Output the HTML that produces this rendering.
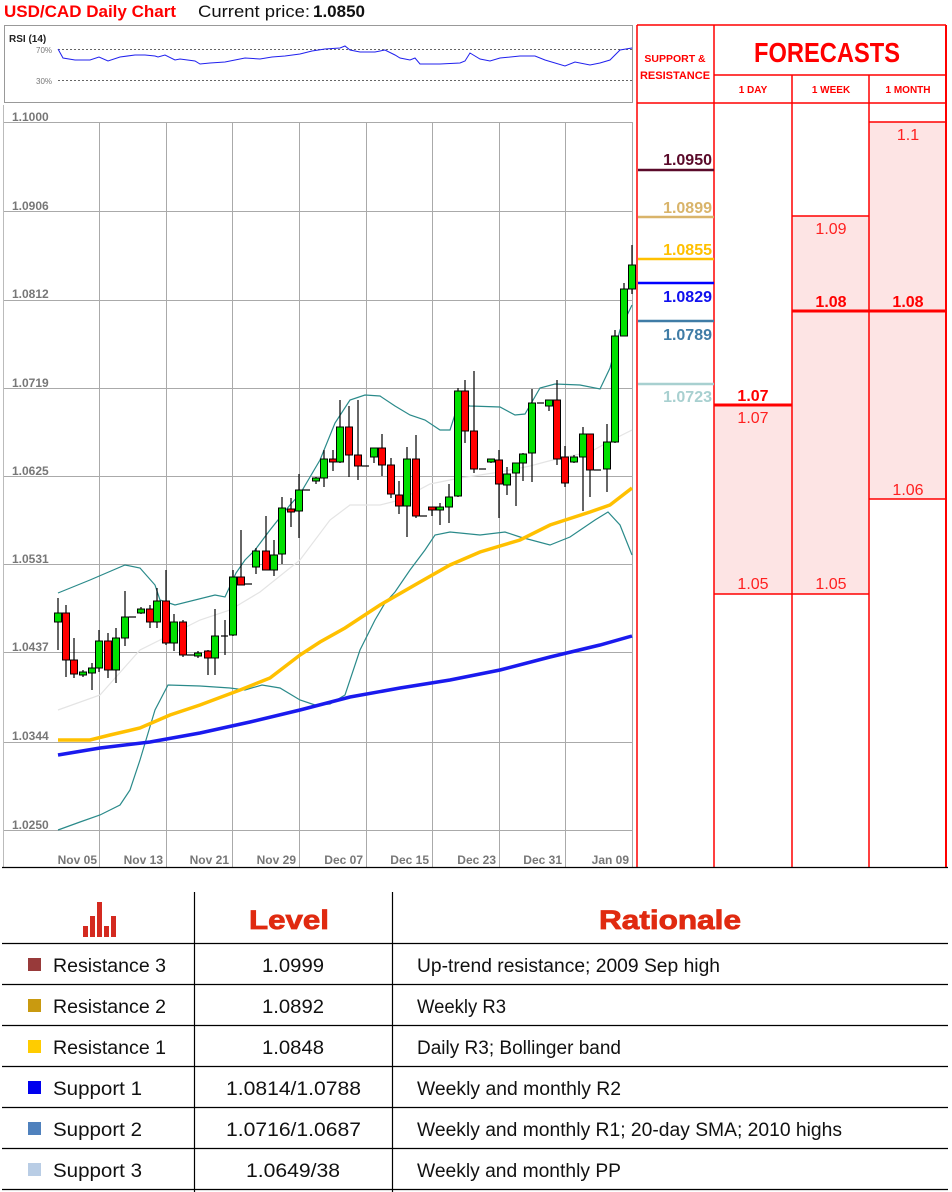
<!DOCTYPE html>
<html><head><meta charset="utf-8"><style>
html,body{margin:0;padding:0;background:#fff;}
svg{display:block;}
text{font-family:"Liberation Sans",sans-serif;}
</style></head><body>
<svg width="952" height="1192" viewBox="0 0 952 1192" xmlns="http://www.w3.org/2000/svg">
<rect width="952" height="1192" fill="#fff"/>
<text x="4" y="17" font-size="17" font-weight="bold" fill="#ff0000" textLength="172" lengthAdjust="spacingAndGlyphs">USD/CAD Daily Chart</text>
<text x="198" y="17" font-size="17" fill="#111" textLength="112" lengthAdjust="spacingAndGlyphs">Current price:</text>
<text x="313" y="17" font-size="17" font-weight="bold" fill="#111" textLength="52" lengthAdjust="spacingAndGlyphs">1.0850</text>

<rect x="4.5" y="25.5" width="628" height="77" fill="#fff" stroke="#999"/>
<text x="9" y="42" font-size="10" font-weight="bold" fill="#222">RSI (14)</text>
<text x="36" y="53" font-size="8" fill="#777">70%</text>
<text x="36" y="84" font-size="8" fill="#777">30%</text>
<line x1="58" y1="49.5" x2="632" y2="49.5" stroke="#666" stroke-dasharray="2,2"/>
<line x1="58" y1="80.5" x2="632" y2="80.5" stroke="#666" stroke-dasharray="2,2"/>
<polyline fill="none" stroke="#2020ee" stroke-width="1" points="58,49 63,58 75,60 90,60 99,57 108,61 120,57 135,55 145,55 155,56 158,57 165,55 175,60 180,59 195,61 200,64 210,63 225,62 235,60 245,58 260,59 272,57 285,56 300,54 312,51 325,49 340,48 345,46 350,50 360,52 375,52 385,50 395,55 400,58 410,60 415,58 420,64 440,64 460,63 465,61 470,53 480,59 490,61 500,58 520,56 535,56 545,60 565,66 575,62 590,65 600,63 610,60 620,50 632,48"/>

<line x1="3.5" y1="105" x2="3.5" y2="867" stroke="#bbb"/>
<text x="12" y="121" font-size="12" font-weight="bold" fill="#777">1.1000</text>
<g stroke="#aaa" stroke-width="1">
<line x1="4" y1="122.5" x2="632" y2="122.5"/>
<line x1="4" y1="211.5" x2="632" y2="211.5"/>
<line x1="4" y1="300.5" x2="632" y2="300.5"/>
<line x1="4" y1="388.5" x2="632" y2="388.5"/>
<line x1="4" y1="476.5" x2="632" y2="476.5"/>
<line x1="4" y1="564.5" x2="632" y2="564.5"/>
<line x1="4" y1="652.5" x2="632" y2="652.5"/>
<line x1="4" y1="742.5" x2="632" y2="742.5"/>
<line x1="4" y1="830.5" x2="632" y2="830.5"/>
<line x1="99.5" y1="122" x2="99.5" y2="867"/>
<line x1="166.5" y1="122" x2="166.5" y2="867"/>
<line x1="232.5" y1="122" x2="232.5" y2="867"/>
<line x1="299.5" y1="122" x2="299.5" y2="867"/>
<line x1="366.5" y1="122" x2="366.5" y2="867"/>
<line x1="432.5" y1="122" x2="432.5" y2="867"/>
<line x1="499.5" y1="122" x2="499.5" y2="867"/>
<line x1="565.5" y1="122" x2="565.5" y2="867"/>
<line x1="632.5" y1="122" x2="632.5" y2="867"/>
</g>
<g font-size="12" font-weight="bold" fill="#777">
<text x="12" y="210">1.0906</text>
<text x="12" y="298">1.0812</text>
<text x="12" y="387">1.0719</text>
<text x="12" y="475">1.0625</text>
<text x="12" y="563">1.0531</text>
<text x="12" y="651">1.0437</text>
<text x="12" y="740">1.0344</text>
<text x="12" y="829">1.0250</text>
</g>
<g font-size="12" font-weight="bold" fill="#777" text-anchor="end">
<text x="97" y="864">Nov 05</text>
<text x="163" y="864">Nov 13</text>
<text x="229" y="864">Nov 21</text>
<text x="296" y="864">Nov 29</text>
<text x="363" y="864">Dec 07</text>
<text x="429" y="864">Dec 15</text>
<text x="496" y="864">Dec 23</text>
<text x="562" y="864">Dec 31</text>
<text x="629" y="864">Jan 09</text>
</g>

<polyline fill="none" stroke="#e4e4e4" stroke-width="1.2" points="58,710 100,695 140,650 160,640 200,620 230,610 260,592 300,560 330,520 350,505 380,505 400,500 430,484 460,478 500,472 530,466 560,458 590,452 612,440 632,430"/>
<polyline fill="none" stroke="#2a8a8a" stroke-width="1.2" points="58,593 90,580 125,565 140,568 155,585 160,600 175,605 215,595 225,597 236,573 245,560 255,550 270,530 290,505 300,494 320,460 335,423 350,400 365,395 380,396 395,406 410,415 425,420 440,430 450,430 458,405 470,406 500,407 515,415 525,414 540,388 555,384 580,385 600,389 610,368 620,330 632,305"/>
<polyline fill="none" stroke="#2a8a8a" stroke-width="1.2" points="58,830 80,822 100,815 120,805 130,790 140,760 155,710 168,685 200,686 230,688 245,690 262,685 280,688 300,700 315,705 330,704 345,695 360,650 375,620 385,603 395,592 410,570 425,550 435,535 450,532 480,535 505,532 520,537 550,545 570,537 595,520 608,512 620,525 632,555"/>
<polyline fill="none" stroke="#ffc000" stroke-width="3.5" points="58,740 90,740 110,735 140,728 170,715 200,705 240,690 270,678 300,655 320,642 345,628 380,605 420,582 450,565 480,552 520,540 550,525 590,512 610,505 632,488"/>
<polyline fill="none" stroke="#1a1aee" stroke-width="3.5" points="58,755 100,748 150,742 200,733 250,722 300,710 350,697 400,688 450,680 500,670 550,657 600,645 632,636"/>

<g stroke="#000" stroke-width="1.2">
<line x1="58" y1="598" x2="58" y2="650"/><line x1="66" y1="605" x2="66" y2="677"/><line x1="74" y1="638" x2="74" y2="678"/><line x1="83" y1="670" x2="83" y2="677"/><line x1="92" y1="663" x2="92" y2="690"/><line x1="99" y1="630" x2="99" y2="672"/><line x1="108" y1="633" x2="108" y2="678"/><line x1="116" y1="628" x2="116" y2="683"/><line x1="125" y1="591" x2="125" y2="646"/><line x1="129" y1="617" x2="136" y2="617"/><line x1="141" y1="607" x2="141" y2="614"/><line x1="150" y1="605" x2="150" y2="628"/><line x1="157" y1="588" x2="157" y2="628"/><line x1="166" y1="570" x2="166" y2="645"/><line x1="174" y1="614" x2="174" y2="651"/><line x1="183" y1="620" x2="183" y2="657"/><line x1="187" y1="655" x2="194" y2="655"/><line x1="198" y1="651" x2="198" y2="658"/><line x1="208" y1="650" x2="208" y2="675"/><line x1="215" y1="609" x2="215" y2="675"/><line x1="225" y1="620" x2="225" y2="655"/><line x1="221" y1="636" x2="228" y2="636"/><line x1="233" y1="570" x2="233" y2="636"/><line x1="241" y1="530" x2="241" y2="585"/><line x1="245" y1="584" x2="252" y2="584"/><line x1="256" y1="548" x2="256" y2="574"/><line x1="266" y1="516" x2="266" y2="570"/><line x1="274" y1="540" x2="274" y2="576"/><line x1="282" y1="497" x2="282" y2="564"/><line x1="291" y1="498" x2="291" y2="527"/><line x1="299" y1="474" x2="299" y2="538"/><line x1="303" y1="490" x2="310" y2="490"/><line x1="316" y1="477" x2="316" y2="484"/><line x1="324" y1="450" x2="324" y2="487"/><line x1="333" y1="450" x2="333" y2="471"/><line x1="340" y1="400" x2="340" y2="463"/><line x1="349" y1="406" x2="349" y2="477"/><line x1="358" y1="400" x2="358" y2="480"/><line x1="362" y1="466" x2="369" y2="466"/><line x1="374" y1="448" x2="374" y2="463"/><line x1="382" y1="434" x2="382" y2="476"/><line x1="391" y1="458" x2="391" y2="498"/><line x1="399" y1="481" x2="399" y2="514"/><line x1="407" y1="447" x2="407" y2="537"/><line x1="416" y1="435" x2="416" y2="518"/><line x1="420" y1="516" x2="427" y2="516"/><line x1="432" y1="507" x2="432" y2="516"/><line x1="440" y1="503" x2="440" y2="525"/><line x1="449" y1="484" x2="449" y2="523"/><line x1="458" y1="388" x2="458" y2="497"/><line x1="465" y1="380" x2="465" y2="443"/><line x1="474" y1="371" x2="474" y2="473"/><line x1="479" y1="469" x2="486" y2="469"/><line x1="491" y1="459" x2="491" y2="463"/><line x1="499" y1="450" x2="499" y2="518"/><line x1="507" y1="467" x2="507" y2="495"/><line x1="516" y1="463" x2="516" y2="506"/><line x1="523" y1="453" x2="523" y2="481"/><line x1="532" y1="389" x2="532" y2="482"/><line x1="537" y1="403" x2="544" y2="403"/><line x1="549" y1="400" x2="549" y2="411"/><line x1="557" y1="380" x2="557" y2="465"/><line x1="565" y1="446" x2="565" y2="487"/><line x1="574" y1="455" x2="574" y2="463"/><line x1="583" y1="427" x2="583" y2="511"/><line x1="590" y1="434" x2="590" y2="497"/><line x1="594" y1="470" x2="601" y2="470"/><line x1="607" y1="424" x2="607" y2="492"/><line x1="615" y1="330" x2="615" y2="443"/><line x1="624" y1="283" x2="624" y2="336"/><line x1="632" y1="245" x2="632" y2="294"/>
</g>
<g stroke="#000" stroke-width="1">
<rect x="54.5" y="613" width="7" height="9" fill="#00e000"/>
<rect x="62.5" y="613" width="7" height="47" fill="#ff0000"/>
<rect x="70.5" y="660" width="7" height="14" fill="#ff0000"/>
<rect x="79.5" y="672" width="7" height="3" fill="#00e000"/>
<rect x="88.5" y="668" width="7" height="5" fill="#00e000"/>
<rect x="95.5" y="641" width="7" height="27" fill="#00e000"/>
<rect x="104.5" y="641" width="7" height="29" fill="#ff0000"/>
<rect x="112.5" y="638" width="7" height="32" fill="#00e000"/>
<rect x="121.5" y="617" width="7" height="21" fill="#00e000"/>
<rect x="137.5" y="609" width="7" height="4" fill="#00e000"/>
<rect x="146.5" y="609" width="7" height="13" fill="#ff0000"/>
<rect x="153.5" y="601" width="7" height="21" fill="#00e000"/>
<rect x="162.5" y="601" width="7" height="42" fill="#ff0000"/>
<rect x="170.5" y="622" width="7" height="21" fill="#00e000"/>
<rect x="179.5" y="622" width="7" height="33" fill="#ff0000"/>
<rect x="194.5" y="653" width="7" height="3" fill="#00e000"/>
<rect x="204.5" y="651" width="7" height="7" fill="#ff0000"/>
<rect x="211.5" y="636" width="7" height="22" fill="#00e000"/>
<rect x="229.5" y="577" width="7" height="58" fill="#00e000"/>
<rect x="237.5" y="577" width="7" height="8" fill="#ff0000"/>
<rect x="252.5" y="551" width="7" height="16" fill="#00e000"/>
<rect x="262.5" y="551" width="7" height="19" fill="#ff0000"/>
<rect x="270.5" y="555" width="7" height="15" fill="#00e000"/>
<rect x="278.5" y="508" width="7" height="46" fill="#00e000"/>
<rect x="287.5" y="509" width="7" height="3" fill="#ff0000"/>
<rect x="295.5" y="490" width="7" height="21" fill="#00e000"/>
<rect x="312.5" y="478" width="7" height="3" fill="#00e000"/>
<rect x="320.5" y="459" width="7" height="19" fill="#00e000"/>
<rect x="329.5" y="459" width="7" height="3" fill="#ff0000"/>
<rect x="336.5" y="427" width="7" height="35" fill="#00e000"/>
<rect x="345.5" y="427" width="7" height="28" fill="#ff0000"/>
<rect x="354.5" y="455" width="7" height="11" fill="#ff0000"/>
<rect x="370.5" y="448" width="7" height="9" fill="#00e000"/>
<rect x="378.5" y="448" width="7" height="17" fill="#ff0000"/>
<rect x="387.5" y="465" width="7" height="29" fill="#ff0000"/>
<rect x="395.5" y="495" width="7" height="11" fill="#ff0000"/>
<rect x="403.5" y="459" width="7" height="47" fill="#00e000"/>
<rect x="412.5" y="459" width="7" height="57" fill="#ff0000"/>
<rect x="428.5" y="507" width="7" height="3" fill="#ff0000"/>
<rect x="436.5" y="507" width="7" height="3" fill="#00e000"/>
<rect x="445.5" y="497" width="7" height="10" fill="#00e000"/>
<rect x="454.5" y="391" width="7" height="105" fill="#00e000"/>
<rect x="461.5" y="391" width="7" height="40" fill="#ff0000"/>
<rect x="470.5" y="431" width="7" height="38" fill="#ff0000"/>
<rect x="487.5" y="459" width="7" height="3" fill="#00e000"/>
<rect x="495.5" y="460" width="7" height="24" fill="#ff0000"/>
<rect x="503.5" y="474" width="7" height="11" fill="#00e000"/>
<rect x="512.5" y="463" width="7" height="10" fill="#00e000"/>
<rect x="519.5" y="454" width="7" height="9" fill="#00e000"/>
<rect x="528.5" y="403" width="7" height="50" fill="#00e000"/>
<rect x="545.5" y="400" width="7" height="6" fill="#00e000"/>
<rect x="553.5" y="400" width="7" height="59" fill="#ff0000"/>
<rect x="561.5" y="457" width="7" height="26" fill="#ff0000"/>
<rect x="570.5" y="457" width="7" height="5" fill="#00e000"/>
<rect x="579.5" y="434" width="7" height="23" fill="#00e000"/>
<rect x="586.5" y="434" width="7" height="36" fill="#ff0000"/>
<rect x="603.5" y="442" width="7" height="27" fill="#00e000"/>
<rect x="611.5" y="336" width="7" height="106" fill="#00e000"/>
<rect x="620.5" y="289" width="7" height="47" fill="#00e000"/>
<rect x="628.5" y="265" width="7" height="24" fill="#00e000"/>
</g>

<rect x="792" y="216" width="77" height="378" fill="#fde4e4"/>
<rect x="869" y="122" width="77" height="377" fill="#fde4e4"/>
<rect x="714" y="405" width="78" height="189" fill="#fde4e4"/>
<g stroke="#ff0000" stroke-width="1.5">
<line x1="637" y1="25" x2="946" y2="25"/>
<line x1="714" y1="75" x2="946" y2="75"/>
<line x1="637" y1="103" x2="946" y2="103"/>
<line x1="637" y1="25" x2="637" y2="867"/>
<line x1="714" y1="25" x2="714" y2="867"/>
<line x1="792" y1="75" x2="792" y2="867"/>
<line x1="869" y1="75" x2="869" y2="867"/>
<line x1="946" y1="25" x2="946" y2="867"/>
<line x1="869" y1="122" x2="946" y2="122"/>
<line x1="792" y1="216" x2="869" y2="216"/>
<line x1="869" y1="499" x2="946" y2="499"/>
<line x1="714" y1="594" x2="869" y2="594"/>
</g>
<line x1="714" y1="405" x2="792" y2="405" stroke="#ff0000" stroke-width="3"/>
<line x1="792" y1="311" x2="946" y2="311" stroke="#ff0000" stroke-width="3"/>
<line x1="946" y1="25" x2="946" y2="867" stroke="#ff0000" stroke-width="2"/>

<g font-weight="bold" fill="#ff0000" text-anchor="middle">
<text x="675" y="62" font-size="10.5">SUPPORT &amp;</text>
<text x="675" y="79" font-size="11">RESISTANCE</text>
<text x="827" y="62" font-size="28" textLength="146" lengthAdjust="spacingAndGlyphs">FORECASTS</text>
<text x="753" y="93" font-size="10">1 DAY</text>
<text x="831" y="93" font-size="10">1 WEEK</text>
<text x="908" y="93" font-size="10">1 MONTH</text>
</g>
<g font-size="16" text-anchor="middle" fill="#ff2020">
<text x="753" y="401" font-weight="bold" fill="#ff0000">1.07</text>
<text x="753" y="423">1.07</text>
<text x="753" y="589">1.05</text>
<text x="831" y="234">1.09</text>
<text x="831" y="307" font-weight="bold" fill="#ff0000">1.08</text>
<text x="831" y="589">1.05</text>
<text x="908" y="140">1.1</text>
<text x="908" y="307" font-weight="bold" fill="#ff0000">1.08</text>
<text x="908" y="495">1.06</text>
</g>
<line x1="638" y1="170" x2="714" y2="170" stroke="#5a0a2a" stroke-width="2.5"/>
<line x1="638" y1="217" x2="714" y2="217" stroke="#d9b46a" stroke-width="2.5"/>
<line x1="638" y1="259" x2="714" y2="259" stroke="#ffc000" stroke-width="2.5"/>
<line x1="638" y1="283" x2="714" y2="283" stroke="#0000ff" stroke-width="2.5"/>
<line x1="638" y1="321" x2="714" y2="321" stroke="#3f7ca6" stroke-width="2.5"/>
<line x1="638" y1="384" x2="714" y2="384" stroke="#a8d0d0" stroke-width="2.5"/>
<g font-size="16" font-weight="bold" text-anchor="end">
<text x="712" y="165" fill="#5a0a2a">1.0950</text>
<text x="712" y="213" fill="#d9b46a">1.0899</text>
<text x="712" y="255" fill="#ffc000">1.0855</text>
<text x="712" y="302" fill="#1010ee">1.0829</text>
<text x="712" y="340" fill="#3f7ca6">1.0789</text>
<text x="712" y="402" fill="#a8d0d0">1.0723</text>
</g>

<line x1="2" y1="867.5" x2="948" y2="867.5" stroke="#000" stroke-width="1.2"/>

<g stroke="#000" stroke-width="1.2">
<line x1="194.5" y1="892" x2="194.5" y2="1192"/>
<line x1="392.5" y1="892" x2="392.5" y2="1192"/>
<line x1="2" y1="943.5" x2="948" y2="943.5"/>
<line x1="2" y1="984.5" x2="948" y2="984.5"/>
<line x1="2" y1="1025.5" x2="948" y2="1025.5"/>
<line x1="2" y1="1066.5" x2="948" y2="1066.5"/>
<line x1="2" y1="1107.5" x2="948" y2="1107.5"/>
<line x1="2" y1="1148.5" x2="948" y2="1148.5"/>
<line x1="2" y1="1189.5" x2="948" y2="1189.5"/>
</g>
<g fill="#d42a20">
<rect x="83" y="926" width="5" height="11"/>
<rect x="90" y="916" width="5" height="21"/>
<rect x="97" y="902" width="5" height="35"/>
<rect x="104" y="926" width="5" height="11"/>
<rect x="111" y="916" width="5" height="21"/>
</g>
<text x="289" y="929" font-size="27" font-weight="bold" fill="#e02a10" text-anchor="middle" textLength="80" lengthAdjust="spacingAndGlyphs" stroke="#e02a10" stroke-width="0.8">Level</text>
<text x="670" y="929" font-size="27" font-weight="bold" fill="#e02a10" text-anchor="middle" textLength="142" lengthAdjust="spacingAndGlyphs" stroke="#e02a10" stroke-width="0.8">Rationale</text>

<rect x="28" y="958" width="13" height="13" fill="#983a3a"/>
<rect x="28" y="999" width="13" height="13" fill="#c99a10"/>
<rect x="28" y="1040" width="13" height="13" fill="#ffcc00"/>
<rect x="28" y="1081" width="13" height="13" fill="#0000ee"/>
<rect x="28" y="1122" width="13" height="13" fill="#4f81bd"/>
<rect x="28" y="1163" width="13" height="13" fill="#b9cde5"/>
<g font-size="19" fill="#111">
<text x="53" y="972" textLength="113" lengthAdjust="spacingAndGlyphs">Resistance 3</text>
<text x="53" y="1013" textLength="113" lengthAdjust="spacingAndGlyphs">Resistance 2</text>
<text x="53" y="1054" textLength="113" lengthAdjust="spacingAndGlyphs">Resistance 1</text>
<text x="53" y="1095" textLength="89" lengthAdjust="spacingAndGlyphs">Support 1</text>
<text x="53" y="1136" textLength="89" lengthAdjust="spacingAndGlyphs">Support 2</text>
<text x="53" y="1177" textLength="89" lengthAdjust="spacingAndGlyphs">Support 3</text>
<text x="262" y="972" textLength="62" lengthAdjust="spacingAndGlyphs">1.0999</text>
<text x="262" y="1013" textLength="62" lengthAdjust="spacingAndGlyphs">1.0892</text>
<text x="262" y="1054" textLength="62" lengthAdjust="spacingAndGlyphs">1.0848</text>
<text x="226" y="1095" textLength="135" lengthAdjust="spacingAndGlyphs">1.0814/1.0788</text>
<text x="226" y="1136" textLength="135" lengthAdjust="spacingAndGlyphs">1.0716/1.0687</text>
<text x="246" y="1177" textLength="94" lengthAdjust="spacingAndGlyphs">1.0649/38</text>
<text x="417" y="972" textLength="303" lengthAdjust="spacingAndGlyphs">Up-trend resistance; 2009 Sep high</text>
<text x="417" y="1013" textLength="89" lengthAdjust="spacingAndGlyphs">Weekly R3</text>
<text x="417" y="1054" textLength="204" lengthAdjust="spacingAndGlyphs">Daily R3; Bollinger band</text>
<text x="417" y="1095" textLength="204" lengthAdjust="spacingAndGlyphs">Weekly and monthly R2</text>
<text x="417" y="1136" textLength="425" lengthAdjust="spacingAndGlyphs">Weekly and monthly R1; 20-day SMA; 2010 highs</text>
<text x="417" y="1177" textLength="204" lengthAdjust="spacingAndGlyphs">Weekly and monthly PP</text>
</g>
</svg>
</body></html>
